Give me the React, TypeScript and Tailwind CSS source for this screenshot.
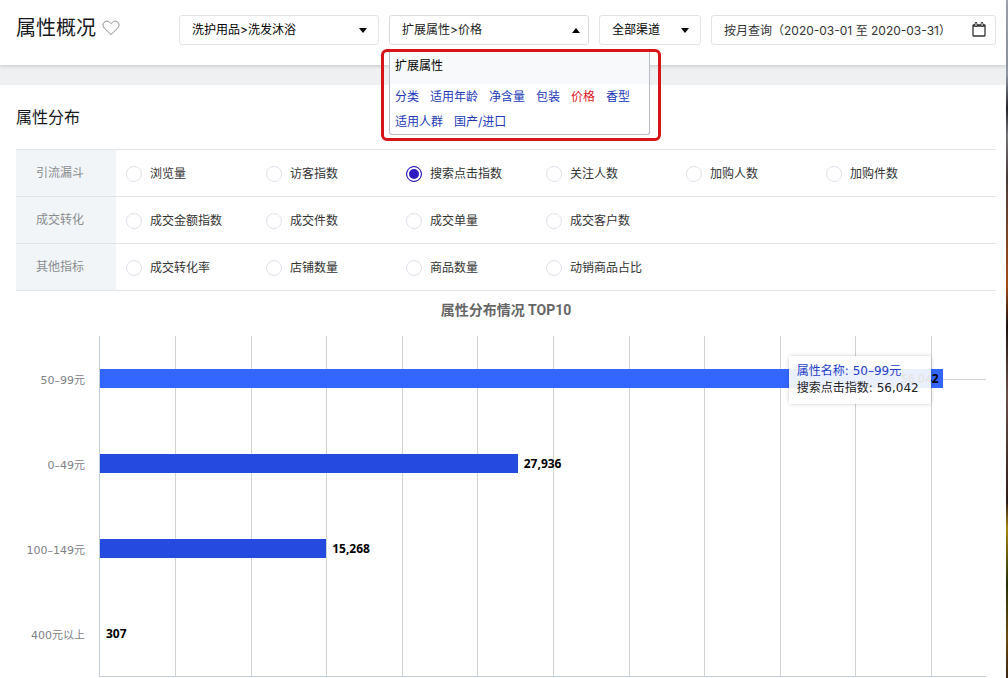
import { useState } from 'react'
import type { ReactNode } from 'react'

type Metric = { id: string; label: string }
type MetricGroup = { title: string; metrics: Metric[] }
type PriceRow = { name: string; value: number }

const ATTRIBUTES = ['分类', '适用年龄', '净含量', '包装', '价格', '香型', '适用人群', '国产/进口']

const METRIC_GROUPS: MetricGroup[] = [
  {
    title: '引流漏斗',
    metrics: [
      { id: 'views', label: '浏览量' },
      { id: 'visitors', label: '访客指数' },
      { id: 'search_clicks', label: '搜索点击指数' },
      { id: 'followers', label: '关注人数' },
      { id: 'cart_users', label: '加购人数' },
      { id: 'cart_items', label: '加购件数' },
    ],
  },
  {
    title: '成交转化',
    metrics: [
      { id: 'deal_amount', label: '成交金额指数' },
      { id: 'deal_items', label: '成交件数' },
      { id: 'deal_orders', label: '成交单量' },
      { id: 'deal_customers', label: '成交客户数' },
    ],
  },
  {
    title: '其他指标',
    metrics: [
      { id: 'deal_rate', label: '成交转化率' },
      { id: 'shops', label: '店铺数量' },
      { id: 'goods', label: '商品数量' },
      { id: 'active_goods', label: '动销商品占比' },
    ],
  },
]

const PRICE_ROWS: PriceRow[] = [
  { name: '50–99元', value: 56042 },
  { name: '0–49元', value: 27936 },
  { name: '100–149元', value: 15268 },
  { name: '400元以上', value: 307 },
]

// the value axis starts at the smallest bar, one grid line per 5000
const AXIS_MIN = 307
const AXIS_SPAN = 58600
const GRID_STEP = 5000

function toPct(amount: number) {
  return `${(amount / AXIS_SPAN) * 100}%`
}

function Caret({ up = false }: { up?: boolean }) {
  return (
    <svg viewBox="0 0 8 5" className="h-[5px] w-2 shrink-0 fill-black" aria-hidden="true">
      <path d={up ? 'M0 5 4 0l4 5z' : 'M0 0h8L4 5z'} />
    </svg>
  )
}

function HeartIcon() {
  return (
    <svg viewBox="0 0 18 16" className="h-4 w-[18px]" fill="none" stroke="#8b8b8b" aria-hidden="true">
      <path d="M9 14.600 2.300 8.100C.7 6.500.6 4 2 2.400c1.500-1.700 4.100-1.700 5.700-.1L9 3.700l1.300-1.400c1.600-1.600 4.200-1.600 5.700.1 1.400 1.600 1.300 4.100-.3 5.700z" />
    </svg>
  )
}

function CalendarIcon() {
  return (
    <svg viewBox="0 0 14 15" className="h-[15px] w-[14px]" fill="none" aria-hidden="true">
      <rect x="1" y="3" width="12" height="11" rx="0.5" stroke="#333" strokeWidth="1.3" />
      <path d="M1 3.800h12" stroke="#333" strokeWidth="1.8" />
      <path d="M4 1.300v2.500M10 1.300v2.500" stroke="#333" strokeWidth="2.6" strokeLinecap="round" />
      <path d="M4 1.500v2M10 1.500v2" stroke="#fff" strokeWidth="1" strokeLinecap="round" />
    </svg>
  )
}

function SelectBox({ label, value, className }: { label: string; value: string; className: string }) {
  return (
    <div className={`relative h-[30px] ${className}`}>
      <select
        aria-label={label}
        className="h-full w-full appearance-none rounded-[3px] border border-[#e1e4e6] bg-white pl-3 pr-6 text-xs text-black"
      >
        <option>{value}</option>
      </select>
      <span className="pointer-events-none absolute inset-y-0 right-3 flex items-center pt-px">
        <Caret />
      </span>
    </div>
  )
}

function AttributeMenu() {
  const [selected, setSelected] = useState('价格')

  return (
    <div className="relative h-[30px] w-[200px] shrink-0">
      <button
        type="button"
        aria-expanded="true"
        className="flex h-full w-full items-center justify-between rounded-[3px] border border-[#d9dde2] bg-white pl-3 pr-2 text-xs text-[#222]"
      >
        扩展属性&gt;{selected}
        <Caret up />
      </button>
      <div className="absolute -left-2 top-[34px] z-10 w-[280px] rounded-md border-[3px] border-[#d7141a] px-[5px] pb-[3px]">
        <div className="w-[261px] overflow-hidden rounded-b-[3px] border border-t-0 border-[#b9bdca] bg-white">
          <h3 className="bg-[#f8f9fa] px-[5px] pb-2 pt-1 text-xs leading-5 text-black">扩展属性</h3>
          <div className="flex flex-wrap gap-x-[11px] px-[5px]">
            {ATTRIBUTES.map((name) => (
              <a
                key={name}
                href="#"
                onClick={() => setSelected(name)}
                className={`text-xs leading-[25px] ${name === selected ? 'text-[#dc1420]' : 'text-[#2138b8]'}`}
              >
                {name}
              </a>
            ))}
          </div>
        </div>
      </div>
    </div>
  )
}

function PageHeader() {
  return (
    <header className="relative z-10 flex h-[65px] items-start bg-white pl-4 pr-[10px] pt-[15px] shadow-[0_1px_4px_rgba(0,0,0,0.18)]">
      <div className="flex w-[163px] shrink-0 items-center gap-[6px]">
        <h1 className="text-xl leading-[26px] text-[#16191c]">属性概况</h1>
        <button type="button" aria-label="收藏">
          <HeartIcon />
        </button>
      </div>
      <div className="flex flex-1 gap-[10px]">
        <SelectBox label="类目" value="洗护用品>洗发沐浴" className="w-[200px] shrink-0" />
        <AttributeMenu />
        <SelectBox label="渠道" value="全部渠道" className="w-[102px] shrink-0" />
        <div className="relative h-[30px] flex-1">
          <input
            readOnly
            aria-label="查询日期"
            value="按月查询（2020-03-01 至 2020-03-31）"
            className="h-full w-full rounded-[3px] border border-[#e1e4e6] pb-[2px] pl-3 pr-8 text-xs text-[#333]"
          />
          <span className="pointer-events-none absolute inset-y-0 right-[10px] flex items-center pb-[2px]">
            <CalendarIcon />
          </span>
        </div>
      </div>
    </header>
  )
}

function MetricRow({ title, children }: { title: string; children: ReactNode }) {
  return (
    <div role="radiogroup" aria-label={title} className="flex h-[47px] border-t border-[#e1e4e6]">
      <div className="flex w-[100px] items-center bg-[#f1f5f7] pl-5 text-xs text-[#8a8d90]">{title}</div>
      <div className="flex flex-1 items-center pl-[10px] pt-[2px]">{children}</div>
    </div>
  )
}

function Tooltip({ row }: { row: PriceRow }) {
  return (
    <div className="absolute -top-[13px] right-3 z-10 whitespace-nowrap rounded-[3px] bg-white/90 py-[7px] pl-2 pr-3 font-['DejaVu_Sans','Noto_Sans_CJK_SC',sans-serif] text-xs leading-[17px] shadow-[0_0_4px_rgba(0,0,0,0.2)]">
      <p className="text-[#2440c8]">属性名称: {row.name}</p>
      <p className="text-[#222]">搜索点击指数: {row.value.toLocaleString('en-US')}</p>
    </div>
  )
}

function PriceChart() {
  const gridLines = Array.from({ length: 11 }, (_, i) => (i + 1) * GRID_STEP)

  return (
    <div className="flex pr-5">
      <div className="w-[99px] shrink-0 pr-[14px] text-right font-['DejaVu_Sans','Noto_Sans_CJK_SC',sans-serif] text-[11px] text-[#7d8084]">
        {PRICE_ROWS.map((row) => (
          <div key={row.name} className="flex h-[85px] items-center justify-end pt-[5px]">
            {row.name}
          </div>
        ))}
      </div>
      <div className="relative flex-1 border-b border-l border-[#c3cdd3]">
        <svg className="absolute inset-0 h-full w-full" aria-hidden="true">
          {gridLines.map((line) => (
            <line key={line} x1={toPct(line)} x2={toPct(line)} y1="0" y2="100%" stroke="#cfd3d6" shapeRendering="crispEdges" />
          ))}
          <line x1="0" x2="100%" y1="43" y2="43" stroke="#cfd3d6" shapeRendering="crispEdges" />
        </svg>
        {PRICE_ROWS.map((row, index) => {
          const active = index === 0
          return (
            <div key={row.name} className="relative flex h-[85px] items-center">
              <div
                className={`relative h-[19px] ${active ? 'bg-[#3366ff]' : 'bg-[#254ae0]'}`}
                style={{ width: toPct(row.value - AXIS_MIN) }}
              >
                <span
                  className={`absolute inset-y-0 flex items-center font-['Noto_Sans',sans-serif] text-xs font-bold text-black ${active ? 'right-1' : 'left-full pl-[6px]'}`}
                >
                  {row.value.toLocaleString('en-US')}
                </span>
                {active && <Tooltip row={row} />}
              </div>
            </div>
          )
        })}
      </div>
    </div>
  )
}

export default function App() {
  const [metric, setMetric] = useState('search_clicks')

  return (
    <div className="flex min-h-screen bg-[#eff0f2] font-['Inter','Noto_Sans_CJK_SC',sans-serif]">
      <div className="flex min-w-0 flex-1 flex-col">
        <PageHeader />
        <main className="mt-5 flex-1 bg-white pt-5">
          <section className="pl-4 pr-[10px]">
            <h2 className="text-base leading-6 text-[#16191c]">属性分布</h2>
            <div className="mt-5 border-b border-[#e1e4e6]">
              {METRIC_GROUPS.map((group) => (
                <MetricRow key={group.title} title={group.title}>
                  {group.metrics.map((item) => (
                    <label key={item.id} className="flex w-[140px] items-center gap-2 text-xs text-[#333]">
                      <input
                        type="radio"
                        name="metric"
                        checked={metric === item.id}
                        onChange={() => setMetric(item.id)}
                        className="size-4 appearance-none rounded-full border border-[#dfe2ea] bg-white checked:border-[#2d1cc0] checked:bg-[#2d1cc0] checked:shadow-[inset_0_0_0_2px_#fff]"
                      />
                      {item.label}
                    </label>
                  ))}
                </MetricRow>
              ))}
            </div>
            <h3 className="mt-[9px] text-center font-['Roboto','Noto_Sans_CJK_SC',sans-serif] text-sm font-bold text-[#666]">
              属性分布情况 TOP10
            </h3>
          </section>
          <section className="mt-4">
            <PriceChart />
          </section>
        </main>
      </div>
      <div className="w-[2px] bg-[linear-gradient(#a3a8b3_0%,#8f95a1_11%,#26262c_16%,#77757a_20%,#4a3b3c_26%,#a34b16_42%,#1f1210_48%,#6b5048_58%,#2e1c18_74%,#a8860f_78%,#263008_86%,#6b4a10_94%,#3a2412_100%)]" />
    </div>
  )
}
